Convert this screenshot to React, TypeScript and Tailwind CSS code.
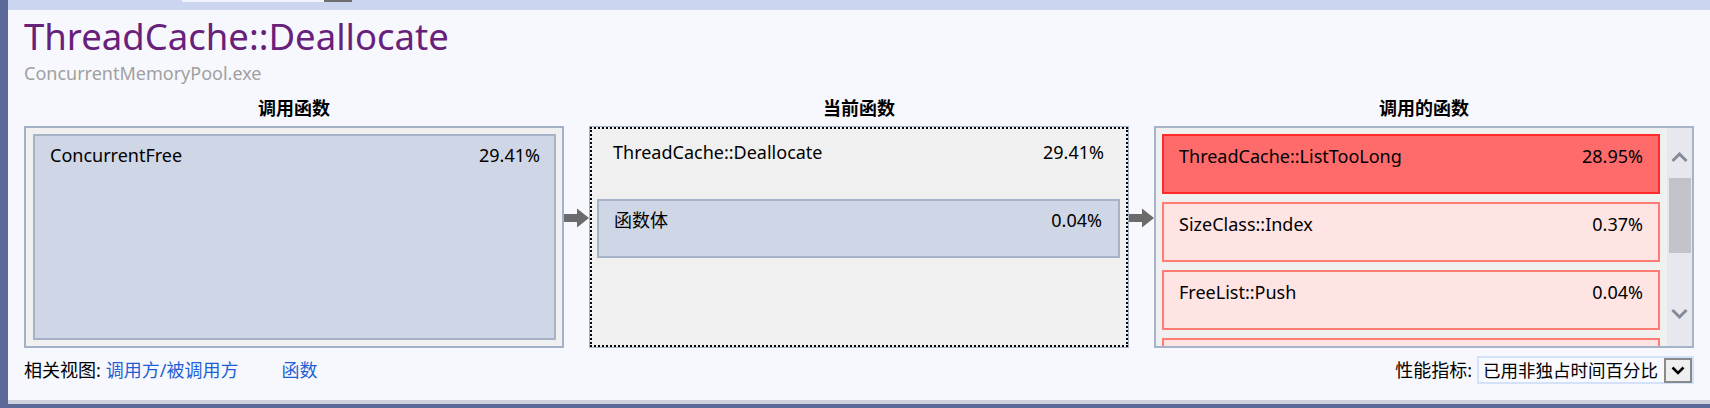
import React from "react";

type Entry = { name: string; pct: string };

const callees: Entry[] = [
  { name: "ThreadCache::ListTooLong", pct: "28.95%" },
  { name: "SizeClass::Index", pct: "0.37%" },
  { name: "FreeList::Push", pct: "0.04%" },
  { name: "", pct: "" },
];

const Arrow = () => (
  <svg width="25" height="20" viewBox="0 0 25 20">
    <path d="M0 6h13V0.5L25 10 13 19.5V14H0z" fill="#6b6b6b" />
  </svg>
);

const ArrowCol = () => (
  <div className="flex w-[25px] shrink-0 flex-col items-center pt-[112px]">
    <Arrow />
  </div>
);

const Column = ({ title, children }: { title: string; children: React.ReactNode }) => (
  <div className="flex flex-1 flex-col">
    <div className="h-[24px] text-center text-[18px] font-bold leading-[24px]">{title}</div>
    <div className="mt-[6px] h-[222px]">{children}</div>
  </div>
);

const Chevron = ({ down, color }: { down?: boolean; color: string }) => (
  <svg width="17" height="11" viewBox="0 0 17 11">
    <path
      d={down ? "M1.5 2L8.5 9 15.5 2" : "M1.5 9L8.5 2 15.5 9"}
      fill="none"
      stroke={color}
      strokeWidth="3"
    />
  </svg>
);

export default function App() {
  return (
    <div className="flex h-[408px] w-[1710px] overflow-hidden bg-[#f7f8fd] font-['Noto_Sans','Noto_Sans_CJK_SC',sans-serif] text-black">
      <div className="w-[8px] shrink-0 bg-[#5b6a98]" />
      <div className="flex flex-1 flex-col">
        {/* top tab strip */}
        <div className="flex h-[10px] shrink-0 bg-[#cbd5ef]">
          <div className="ml-[174px] flex h-[2px] w-[170px]">
            <div className="flex-1 bg-[#f1f4fc]" />
            <div className="w-[28px] bg-[#6e6e6e]" />
          </div>
        </div>

        <div className="flex flex-1 flex-col px-4">
          <h1 className="mt-[8px] text-[36.5px] leading-[36px] text-[#68217a]">ThreadCache::Deallocate</h1>
          <div className="mt-[7px] text-[18px] leading-[24px] text-[#a0a0a0]">ConcurrentMemoryPool.exe</div>

          <div className="mt-[11px] flex h-[252px] text-[18px] leading-[24px]">
            <Column title="调用函数">
              <div className="h-full border-2 border-[#a3b1c8] bg-[#f0f0f0] p-[6px] pl-[7px]">
                <div className="flex h-full justify-between border-2 border-[#a5b2c7] bg-[#cfd6e5] pl-[15px] pr-[14px] pt-[7px]">
                  <span>ConcurrentFree</span>
                  <span>29.41%</span>
                </div>
              </div>
            </Column>
            <ArrowCol />
            <Column title="当前函数">
              <div className="h-full border border-[#a3b1c8]">
                <div className="flex h-full flex-col border-2 border-dotted border-black bg-[#f0f0f0]">
                  <div className="flex h-[70px] shrink-0 justify-between pl-[21px] pr-[22px] pt-[11px]">
                    <span>ThreadCache::Deallocate</span>
                    <span>29.41%</span>
                  </div>
                  <div className="ml-[5px] mr-[6px] flex h-[59px] justify-between border-2 border-[#a5b2c7] bg-[#cfd6e5] pl-[15px] pr-[16px] pt-[7px]">
                    <span>函数体</span>
                    <span>0.04%</span>
                  </div>
                </div>
              </div>
            </Column>
            <ArrowCol />
            <Column title="调用的函数">
              <div className="flex h-full border-2 border-[#a7b3c8] bg-[#f0f0f0]">
                <div className="flex flex-1 flex-col gap-[8px] overflow-hidden pl-[6px] pr-[7px] pt-[6px]">
                  {callees.map((c, i) => (
                    <div
                      key={i}
                      className={
                        i === 0
                          ? "flex h-[60px] shrink-0 justify-between border-2 border-[#ff2a2a] bg-[#ff6b6b] pl-[15px] pr-[15px] pt-[8px]"
                          : "flex h-[60px] shrink-0 justify-between border-2 border-[#ff7b73] bg-[#ffe4e4] pl-[15px] pr-[15px] pt-[8px]"
                      }
                    >
                      <span>{c.name}</span>
                      <span>{c.pct}</span>
                    </div>
                  ))}
                </div>
                <div className="flex w-[25px] shrink-0 flex-col items-center bg-[#e7e8ed] pt-[24px]">
                  <Chevron color="#878a98" />
                  <div className="mt-[15px] h-[75px] w-[22px] bg-[#c2c3c9]" />
                  <div className="mt-[55px]">
                    <Chevron down color="#878a98" />
                  </div>
                </div>
              </div>
            </Column>
          </div>

          <div className="mt-[8px] flex h-[28px] items-center justify-between text-[18px] leading-[24px]">
            <div className="flex items-center">
              <span>相关视图:</span>
              <span className="ml-[5px] text-[#1f5fd6]">调用方/被调用方</span>
              <span className="ml-[43px] text-[#1f5fd6]">函数</span>
            </div>
            <div className="flex items-center">
              <span>性能指标:</span>
              <div className="ml-[5px] flex h-[28px] w-[217px] items-center border-2 border-[#d3e1f9] bg-[#f8faff]">
                <span className="flex-1 pl-[4px] text-[17.5px]">已用非独占时间百分比</span>
                <div className="flex h-[25px] w-[28px] items-center justify-center border-2 border-[#8a8a8a] bg-[#efefef]">
                  <svg width="14" height="9" viewBox="0 0 14 9">
                    <path d="M1.5 1.5L7 7 12.5 1.5" fill="none" stroke="#000" strokeWidth="2.5" />
                  </svg>
                </div>
              </div>
            </div>
          </div>
        </div>

        <div className="h-[4px] shrink-0 bg-[#cfd2de]" />
        <div className="h-[4px] shrink-0 bg-[#5b6a98]" />
      </div>
    </div>
  );
}
